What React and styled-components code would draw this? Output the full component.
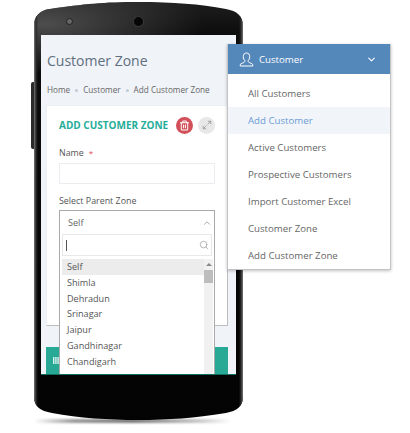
import React from 'react';
import styled, { createGlobalStyle } from 'styled-components';
import { ChevronDown, ChevronUp, Maximize2, Search, Trash2 } from 'lucide-react';

const GlobalStyle = createGlobalStyle`
  html, body {
    margin: 0;
    background: #fff;
    font-family: "Open Sans", "Liberation Sans", sans-serif;
  }
`;

const Stage = styled.div`
  position: relative;
  width: 410px;
  height: 433px;
  padding: 2px 0 0 34px;
  box-sizing: border-box;
  overflow: hidden;
`;

const Phone = styled.div`
  position: relative;
  width: 209px;
  height: 418px;

  /* side button */
  &::before {
    content: '';
    position: absolute;
    left: -3px;
    top: 80px;
    width: 4px;
    height: 67px;
    background: #2b2b2b;
    border-radius: 2px 0 0 2px;
  }

  /* floor shadow */
  &::after {
    content: '';
    position: absolute;
    left: 0;
    right: 12px;
    bottom: -3px;
    height: 4px;
    background: linear-gradient(90deg, transparent, #9a9a9a 20%, #777 50%, #ccc 85%, transparent);
    filter: blur(1px);
  }
`;

const Body = styled.div`
  position: relative;
  z-index: 1;
  width: 209px;
  height: 418px;
  padding: 0 7px;
  box-sizing: border-box;
  clip-path: path('M0 24 C0 14 6 8 16 7 C50 2 70 0 104 0 C140 0 165 2 192 7 C203 9 209 14 209 24 L209 395 C209 404 203 409 192 411 C160 416 135 418 104 418 C75 418 45 416 18 411 C6 409 0 404 0 395 Z');
  background:
    linear-gradient(90deg, #777 0, #2a2a2a 2px, transparent 4px, transparent 205px, #2a2a2a 207px, #777 209px),
    radial-gradient(160px 50px at 10px 22px, #4d4d4d, transparent),
    linear-gradient(180deg, #1e1e1e 0, #0c0c0c 33px, #030303 100%);
`;

const Bezel = styled.div`
  height: 33px;
  display: flex;
  align-items: center;
  padding: 6px 0 0 25px;
  box-sizing: border-box;
`;

const Sensor = styled.div`
  width: 5px;
  height: 5px;
  border-radius: 50%;
  background: #666;
  border: 1px solid #222;
`;

const Camera = styled.div`
  width: 9px;
  height: 9px;
  margin-left: 60px;
  border-radius: 50%;
  background: #060606;
  border: 1px solid #3d3d3d;
`;

const Screen = styled.div`
  width: 195px;
  height: 340px;
  background: #f0f3f8;
  border-bottom: 1px solid #0f6f63;
  box-sizing: border-box;
  overflow: hidden;
`;

const PageTitle = styled.div`
  padding: 13px 0 0 6px;
  font-size: 14px;
  line-height: 26px;
  color: #5f6f7e;
`;

const Crumbs = styled.div`
  display: flex;
  align-items: center;
  gap: 5px;
  margin-top: 8px;
  padding-left: 6px;
  font-size: 8.2px;
  line-height: 16px;
  color: #666;
  white-space: nowrap;
`;

const CrumbDot = styled.span`
  width: 3px;
  height: 3px;
  border-radius: 50%;
  background: #c3ccd6;
`;

const Card = styled.div`
  width: 182px;
  height: 221px;
  margin: 7px 0 0 5px;
  padding: 10px 12px 0;
  box-sizing: border-box;
  background: #fff;
  border: 1px solid #eceef1;
  border-right-color: #bdbdbd;
  border-bottom-color: #bdbdbd;
`;

const CardHeader = styled.div`
  display: flex;
  align-items: center;
  height: 18px;
`;

const CardTitle = styled.div`
  flex: 1;
  font-size: 10px;
  font-weight: 700;
  color: #26ad9a;
  white-space: nowrap;
`;

const RoundButton = styled.div`
  width: 17px;
  height: 17px;
  margin-left: ${p => p.$gap || 0}px;
  border-radius: 50%;
  display: flex;
  align-items: center;
  justify-content: center;
  flex: none;
  background: ${p => (p.$danger ? '#d2505a' : '#e8e8e8')};
  color: ${p => (p.$danger ? '#fff' : '#999')};
`;

const FieldLabel = styled.div`
  margin-top: ${p => p.$top}px;
  font-size: 8.9px;
  line-height: 16px;
  color: #555;
`;

const Required = styled.span`
  margin-left: 5px;
  font-size: 8px;
  color: #e0434f;
`;

const TextInput = styled.div`
  height: 21px;
  margin-top: 2px;
  box-sizing: border-box;
  border: 1px solid #ebedf0;
`;

const SelectField = styled.div`
  position: relative;
`;

const Dropdown = styled.div`
  position: absolute;
  z-index: 2;
  top: 1px;
  left: 0;
  width: 156px;
  height: 175px;
  box-sizing: border-box;
  padding: 0 2px;
  background: #fff;
  border: 1px solid #aaa;
`;

const SelectValue = styled.div`
  display: flex;
  align-items: center;
  justify-content: space-between;
  height: 23px;
  padding: 0 0 0 6px;
  font-size: 9.1px;
  color: #666;
`;

const SearchBox = styled.div`
  display: flex;
  align-items: center;
  justify-content: space-between;
  height: 22px;
  box-sizing: border-box;
  padding: 0 2px 0 3px;
  border: 1px solid #e8e8e8;
  color: #aaa;
`;

const Caret = styled.div`
  width: 1px;
  height: 11px;
  background: #555;
`;

const ListWrap = styled.div`
  display: flex;
  margin: 3px -1px 0 0;
`;

const OptionList = styled.div`
  flex: 1;
`;

const Option = styled.div`
  height: 15.8px;
  line-height: 15.8px;
  padding-left: 5px;
  font-size: 9.1px;
  color: #555;
  background: ${p => (p.$selected ? '#ececec' : 'transparent')};
`;

const Scrollbar = styled.div`
  width: 9px;
  height: 140px;
  background: #f1f1f1;
  display: flex;
  flex-direction: column;
  align-items: center;
`;

const ScrollArrow = styled.div`
  margin-top: 4px;
  border-left: 3px solid transparent;
  border-right: 3px solid transparent;
  border-bottom: 3px solid #888;
`;

const ScrollThumb = styled.div`
  width: 100%;
  height: 13px;
  margin-top: 4px;
  background: #bdbdbd;
`;

const TealBar = styled.div`
  width: 182px;
  height: 27px;
  margin: 21px 0 0 5px;
  padding: 10px 0 0 7px;
  box-sizing: border-box;
  background: #27a996;
  color: #d8f2ee;
`;

const Menu = styled.div`
  position: absolute;
  z-index: 3;
  left: 227px;
  top: 44px;
  width: 164px;
  box-sizing: border-box;
  background: #fff;
  border: 1px solid #c4c4c4;
  border-top: 0;
  box-shadow: 0 1px 3px rgba(0, 0, 0, 0.25);
`;

const MenuHeader = styled.div`
  display: flex;
  align-items: center;
  height: 30px;
  padding: 0 13px 0 11px;
  background: #5488bb;
  color: #fff;
  font-size: 9.66px;
`;

const MenuHeaderLabel = styled.span`
  flex: 1;
  margin-left: 5px;
`;

const MenuList = styled.div`
  padding: 6px 0 0;
  height: 195px;
  box-sizing: border-box;
`;

const MenuItem = styled.div`
  height: 27px;
  line-height: 27px;
  padding-left: 20px;
  font-size: 9.66px;
  color: ${p => (p.$active ? '#6b9bd6' : '#666')};
  background: ${p => (p.$active ? '#f1f5f9' : 'transparent')};
`;

const zones = ['Self', 'Shimla', 'Dehradun', 'Srinagar', 'Jaipur', 'Gandhinagar', 'Chandigarh'];
const menuItems = ['All Customers', 'Add Customer', 'Active Customers', 'Prospective Customers', 'Import Customer Excel', 'Customer Zone', 'Add Customer Zone'];

const UserIcon = () => (
  <svg width="15" height="15" viewBox="0 0 15 15" fill="none" stroke="#fff" strokeWidth="1">
    <path d="M7.5 1 C5.3 1 4.3 2.6 4.3 4.6 C4.3 6.6 5.2 8 5.9 8.7 C6 9.8 5.6 10.2 4.2 10.8 C2.6 11.4 1.2 11.9 1.2 13 L1.2 14 L13.8 14 L13.8 13 C13.8 11.9 12.4 11.4 10.8 10.8 C9.4 10.2 9 9.8 9.1 8.7 C9.8 8 10.7 6.6 10.7 4.6 C10.7 2.6 9.7 1 7.5 1 Z" />
  </svg>
);

const TableIcon = () => (
  <svg width="6" height="7" viewBox="0 0 6 7" fill="currentColor" style={{ display: 'block' }}>
    <rect x="0" y="0" width="1.4" height="7" />
    <rect x="2.2" y="0" width="1.4" height="7" />
    <rect x="4.4" y="0" width="1.4" height="7" />
  </svg>
);

const App = () => (
  <Stage>
    <GlobalStyle />
    <Phone>
      <Body>
        <Bezel>
          <Sensor />
          <Camera />
        </Bezel>
        <Screen>
          <PageTitle>Customer Zone</PageTitle>
          <Crumbs>
            <span>Home</span>
            <CrumbDot />
            <span>Customer</span>
            <CrumbDot />
            <span>Add Customer Zone</span>
          </Crumbs>
          <Card>
            <CardHeader>
              <CardTitle>ADD CUSTOMER ZONE</CardTitle>
              <RoundButton $danger>
                <Trash2 size={11} strokeWidth={2.2} />
              </RoundButton>
              <RoundButton $gap={5}>
                <Maximize2 size={10} strokeWidth={2} />
              </RoundButton>
            </CardHeader>
            <FieldLabel $top={11}>
              Name<Required>*</Required>
            </FieldLabel>
            <TextInput />
            <FieldLabel $top={9}>Select Parent Zone</FieldLabel>
            <SelectField>
              <Dropdown>
                <SelectValue>
                  Self
                  <ChevronUp size={10} color="#999" />
                </SelectValue>
                <SearchBox>
                  <Caret />
                  <Search size={10} />
                </SearchBox>
                <ListWrap>
                  <OptionList>
                    {zones.map((zone, i) => (
                      <Option key={zone} $selected={i === 0}>{zone}</Option>
                    ))}
                  </OptionList>
                  <Scrollbar>
                    <ScrollArrow />
                    <ScrollThumb />
                  </Scrollbar>
                </ListWrap>
              </Dropdown>
            </SelectField>
          </Card>
          <TealBar>
            <TableIcon />
          </TealBar>
        </Screen>
      </Body>
    </Phone>
    <Menu>
      <MenuHeader>
        <UserIcon />
        <MenuHeaderLabel>Customer</MenuHeaderLabel>
        <ChevronDown size={11} strokeWidth={2.4} />
      </MenuHeader>
      <MenuList>
        {menuItems.map((item, i) => (
          <MenuItem key={item} $active={i === 1}>{item}</MenuItem>
        ))}
      </MenuList>
    </Menu>
  </Stage>
);

export default App;
